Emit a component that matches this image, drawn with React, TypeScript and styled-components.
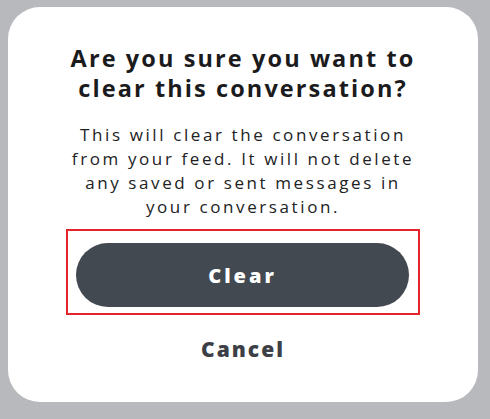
import React from 'react';
import styled, { createGlobalStyle } from 'styled-components';

const GlobalStyle = createGlobalStyle`
  html, body {
    margin: 0;
    padding: 0;
    background: #b8b9bd;
  }
  body {
    font-family: "Open Sans", "Noto Sans", sans-serif;
  }
`;

export default function App() {
  return (
    <Page>
      <GlobalStyle />
      <Dialog>
        <Title>
          Are you sure you want to
          <br />
          clear this conversation?
        </Title>
        <Message>
          This will clear the conversation
          <br />
          from your feed. It will not delete
          <br />
          any saved or sent messages in
          <br />
          your conversation.
        </Message>
        <Highlight>
          <PrimaryButton>Clear</PrimaryButton>
        </Highlight>
        <TextButton>Cancel</TextButton>
      </Dialog>
    </Page>
  );
}

const Page = styled.div`
  width: 490px;
  height: 419px;
  box-sizing: border-box;
  padding: 7px 12px 17px 8px;
  display: flex;
`;

const Dialog = styled.div`
  flex: 1;
  background: #ffffff;
  border-radius: 32px;
  display: flex;
  flex-direction: column;
  align-items: center;
  padding-top: 36px;
  box-sizing: border-box;
`;

const Title = styled.h1`
  margin: 0;
  font-size: 23.5px;
  line-height: 30px;
  font-weight: 700;
  color: #1b1b1d;
  text-align: center;
  letter-spacing: 2.1px;
  white-space: nowrap;
`;

const Message = styled.p`
  margin: 20px 0 0;
  font-size: 17px;
  line-height: 24px;
  font-weight: 400;
  color: #212224;
  text-align: center;
  letter-spacing: 2.6px;
  white-space: nowrap;
`;

const Highlight = styled.div`
  margin-top: 10px;
  width: 354px;
  height: 86px;
  box-sizing: border-box;
  border: 2px solid #e3242b;
  padding: 12px 9px 6px 8px;
  display: flex;
`;

const PrimaryButton = styled.button`
  flex: 1;
  border: none;
  border-radius: 32px;
  background: #434950;
  color: #ffffff;
  font-family: inherit;
  font-size: 20px;
  font-weight: 800;
  letter-spacing: 3px;
  cursor: pointer;
`;

const TextButton = styled.button`
  margin-top: 21px;
  border: none;
  background: none;
  padding: 0;
  font-family: inherit;
  font-size: 21px;
  line-height: 26px;
  font-weight: 800;
  color: #3c4046;
  letter-spacing: 2px;
  cursor: pointer;
`;
